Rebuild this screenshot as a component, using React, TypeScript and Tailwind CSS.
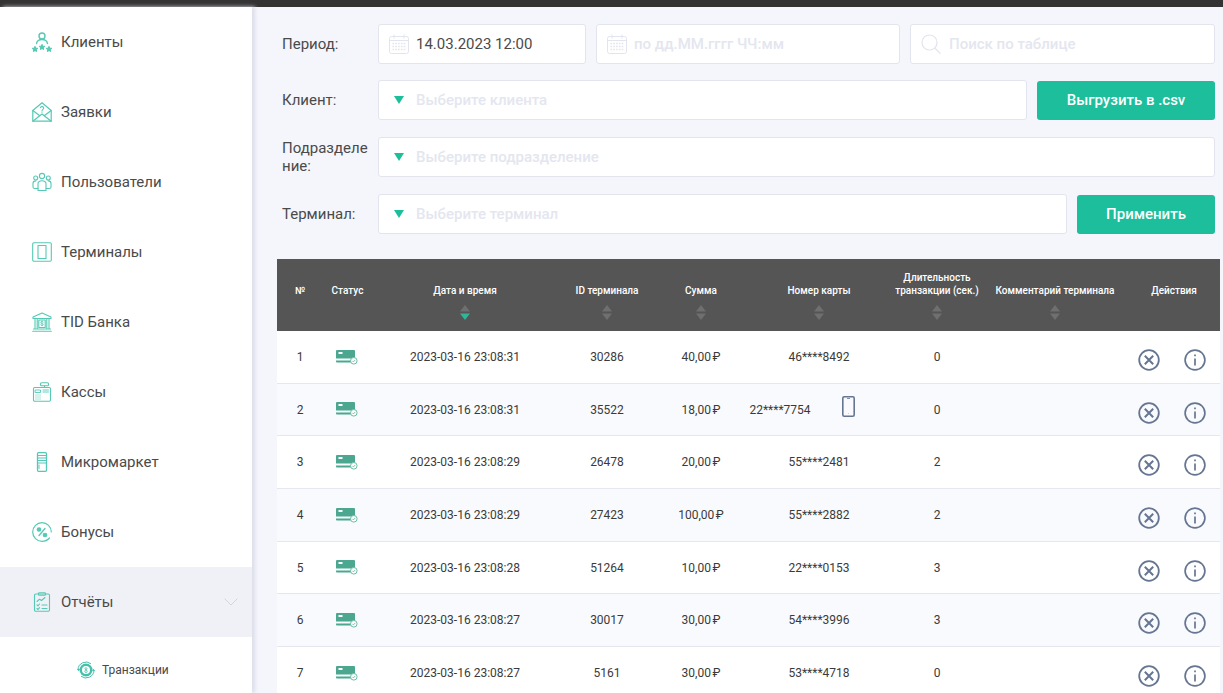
import React from 'react';

const font = { fontFamily: 'Roboto, "Liberation Sans", sans-serif' };

const IconBase = ({ children, className }: { children: React.ReactNode; className: string }) => (
  <svg viewBox="0 0 20 20" fill="none" stroke="currentColor" strokeWidth="1.1" strokeLinecap="round" strokeLinejoin="round" className={className}>
    {children}
  </svg>
);

const star = (x: number, y: number) =>
  `M${x} ${y - 2.4}l.75 1.6 1.75.2-1.3 1.2.35 1.75-1.55-.9-1.55.9.35-1.75-1.3-1.2 1.75-.2z`;

const ClientsIcon = () => (
  <IconBase className="w-5 h-5 text-[#55c9b5]">
    <circle cx="10" cy="4" r="3" strokeWidth="1.4" />
    <path d="M4.5 11.5c.5-2.5 2.5-4 5.5-4s5 1.500 5.500 4" strokeWidth="1.300" />
    <path d={star(3, 17)} fill="currentColor" />
    <path d={star(10, 15)} fill="currentColor" />
    <path d={star(17, 17)} fill="currentColor" />
  </IconBase>
);

const RequestsIcon = () => (
  <IconBase className="w-5 h-5 text-[#55c9b5]">
    <path d="M.8 8.500 10 .8l9.200 7.700v10.700H.8z" strokeWidth="1.200" />
    <path d="M.8 8.500l6.700 5M19.200 8.500l-6.700 5M.8 19.200l9.200-7.200 9.200 7.200" strokeWidth="1.200" />
    <path d="M8.400 5.800c.2-1.600 3.300-1.600 3.300.3 0 1.300-1.700 1.300-1.700 2.800M10 10.200v.1" />
  </IconBase>
);

const UsersIcon = () => (
  <IconBase className="w-5 h-5 text-[#55c9b5]">
    <circle cx="10" cy="4" r="2.600" />
    <circle cx="3.700" cy="6" r="2" />
    <circle cx="16.300" cy="6" r="2" />
    <path d="M6 18.500v-6.500c0-2 1.500-3.200 4-3.200s4 1.200 4 3.200v6.500z" />
    <path d="M6 16.500H2.800c-1 0-1.800-.6-1.800-1.600v-3.400c0-1.500 1-2.600 2.700-2.600M14 16.500h3.200c1 0 1.800-.6 1.800-1.600v-3.400c0-1.500-1-2.600-2.700-2.600" />
  </IconBase>
);

const TerminalIcon = () => (
  <IconBase className="w-5 h-5 text-[#55c9b5]">
    <rect x=".7" y=".7" width="18.600" height="18.600" rx="1.200" />
    <rect x="6" y="3.500" width="8" height="13" />
  </IconBase>
);

const BankIcon = () => (
  <IconBase className="w-5 h-5 text-[#55c9b5]">
    <path d="M1 5 10 1l9 4v1.500H1z" />
    <path d="M3 6.500v10M5.200 6.500v10M14.800 6.500v10M17 6.500v10M1.500 17h17M.7 19.200h18.600" />
    <rect x="6.800" y="8" width="6.400" height="7.500" />
    <path d="M11.300 10c-.4-.8-2.600-.8-2.600.5 0 1.300 2.600.8 2.600 2.100 0 1.200-2.300 1.100-2.700.4M10 9v4.800" strokeWidth=".8" />
  </IconBase>
);

const CashIcon = () => (
  <IconBase className="w-5 h-5 text-[#55c9b5]">
    <rect x="8.500" y=".7" width="8" height="3" rx="1" />
    <path d="M12.500 3.700v1.800" />
    <rect x="1.500" y="5.500" width="17" height="13.800" rx="1.200" />
    <path d="M3.500 8h5v2.500h-5zM11 8h5.500M11 10h5.500" strokeWidth=".9" />
    <path d="M3.500 13h6M3.500 15h6M3.500 17h6" strokeWidth="1" strokeDasharray="1 1" strokeLinecap="butt" />
  </IconBase>
);

const MarketIcon = () => (
  <IconBase className="w-5 h-5 text-[#55c9b5]">
    <rect x="5.500" y=".7" width="9" height="18.600" rx="1" strokeWidth="1.300" />
    <path d="M5.500 3.500h9M5.500 6h9M5.500 8.500h9M5.500 11h9" strokeWidth="1" />
    <path d="M7 13v3.500" strokeWidth="1" />
  </IconBase>
);

const BonusIcon = () => (
  <IconBase className="w-5 h-5 text-[#55c9b5]">
    <path d="M17.500 16C15.700 18.100 13 19.300 10 19.300 4.900 19.300.7 15.100.7 10S4.900.7 10 .7 19.300 4.900 19.300 10" strokeWidth="1.200" />
    <circle cx="7" cy="7.500" r="1.800" fill="currentColor" />
    <circle cx="13" cy="13" r="1.800" fill="currentColor" />
    <path d="M13 6.500 7 13.500" strokeWidth="1.300" />
  </IconBase>
);

const ReportIcon = () => (
  <IconBase className="w-5 h-5 text-[#55c9b5]">
    <rect x="2.500" y="2" width="15" height="17.300" rx="1.200" />
    <rect x="6.500" y=".7" width="7" height="2.600" rx=".8" />
    <path d="M5 9.500l2.500-2.300 2 1.300 3.500-3M5 12.800l1 1 1.500-1.800M10 13h5M5 16.500l1 1 1.500-1.800M10 16.500h5" />
  </IconBase>
);

const TransactionIcon = () => (
  <svg viewBox="0 0 18 18" fill="none" className="w-[18px] h-[18px] text-[#45c0ac]">
    <circle cx="9" cy="9" r="6.500" fill="currentColor" />
    <circle cx="9" cy="9" r="4" fill="#fff" />
    <path d="M1 9a8 8 0 0 1 13-6.200M17 9a8 8 0 0 1-13 6.200" stroke="currentColor" strokeWidth="1" />
    <path d="M0 8h3l-1.500 2.200zM15 10h3l-1.500-2.200z" fill="currentColor" />
    <circle cx="9" cy="7.700" r="1" stroke="currentColor" strokeWidth=".8" />
    <circle cx="9" cy="10.300" r="1.200" stroke="currentColor" strokeWidth=".8" />
  </svg>
);

const CalendarIcon = () => (
  <svg viewBox="0 0 20 20" fill="none" stroke="#e3e5ee" strokeWidth="1" className="w-5 h-5 shrink-0">
    <rect x=".5" y="2.500" width="19" height="17" rx="2" />
    <path d="M.5 6.500h19M5 .5v4M15 .5v4" />
    <path d="M3.500 9.500h13M3.500 12.500h13M3.500 15.500h13" strokeWidth="1.600" strokeDasharray="1.600 1.200" />
  </svg>
);

const SearchIcon = () => (
  <svg viewBox="0 0 20 20" fill="none" stroke="#e3e5ee" strokeWidth="1.200" className="w-5 h-5 shrink-0">
    <circle cx="8.500" cy="8.500" r="7.500" />
    <path d="M13.800 14l5.700 5.700" />
  </svg>
);

const Triangle = () => (
  <svg viewBox="0 0 10 8" className="w-[10px] h-[8px] shrink-0">
    <path d="M0 0h10L5 8z" fill="#1dbf9b" />
  </svg>
);

const SortArrows = ({ active }: { active?: boolean }) => (
  <svg viewBox="0 0 10 15" className="w-[10px] h-[15px]">
    <path d="M5 0l5 6.500H0z" fill="#6f6f6f" />
    <path d="M0 8.500h10L5 15z" fill={active ? '#2fb597' : '#6f6f6f'} />
  </svg>
);

const CardIcon = () => (
  <svg viewBox="0 0 22 15" className="w-[22px] h-[15px]">
    <path d="M1 0h17a1 1 0 0 1 1 1v7.500H0V1a1 1 0 0 1 1-1z" fill="#4ba78f" />
    <rect x="2.500" y="2" width="4" height="2" fill="#fff" />
    <path d="M0 10.500h15V12.500H1a1 1 0 0 1-1-1z" fill="#4ba78f" />
    <circle cx="17.800" cy="10.800" r="3.300" fill="#fff" stroke="#6dbba6" strokeWidth="1" />
    <path d="M16.300 10.800l1.100 1.100 1.900-2" fill="none" stroke="#6dbba6" strokeWidth=".9" />
  </svg>
);

const PhoneIcon = () => (
  <svg viewBox="0 0 13 21" fill="none" stroke="#667592" strokeWidth="1.600" className="w-[13px] h-[21px]">
    <rect x=".8" y=".8" width="11.400" height="19.400" rx="1.400" />
    <path d="M5 2.500h3" strokeWidth=".8" />
    <path d="M6.500 17.500v.3" strokeWidth="1" />
  </svg>
);

const CancelIcon = () => (
  <svg viewBox="0 0 22 22" fill="none" stroke="#667592" strokeWidth="1.800" className="w-[22px] h-[22px]">
    <circle cx="11" cy="11" r="9.800" />
    <path d="M6.800 6.800l8.400 8.400M15.200 6.800l-8.400 8.400" strokeWidth="2" />
  </svg>
);

const InfoIcon = () => (
  <svg viewBox="0 0 22 22" fill="none" stroke="#667592" strokeWidth="1.700" className="w-[22px] h-[22px]">
    <circle cx="11" cy="11" r="9.900" />
    <path d="M11 9.500v7M11 5.500v1.800" strokeWidth="1.700" />
  </svg>
);

const menu = [
  { label: 'Клиенты', icon: <ClientsIcon /> },
  { label: 'Заявки', icon: <RequestsIcon /> },
  { label: 'Пользователи', icon: <UsersIcon /> },
  { label: 'Терминалы', icon: <TerminalIcon /> },
  { label: 'TID Банка', icon: <BankIcon /> },
  { label: 'Кассы', icon: <CashIcon /> },
  { label: 'Микромаркет', icon: <MarketIcon /> },
  { label: 'Бонусы', icon: <BonusIcon /> },
];

const rows = [
  { n: 1, date: '2023-03-16 23:08:31', tid: '30286', sum: '40,00 ₽', card: '46****8492', dur: 0 },
  { n: 2, date: '2023-03-16 23:08:31', tid: '35522', sum: '18,00 ₽', card: '22****7754', dur: 0, phone: true },
  { n: 3, date: '2023-03-16 23:08:29', tid: '26478', sum: '20,00 ₽', card: '55****2481', dur: 2 },
  { n: 4, date: '2023-03-16 23:08:29', tid: '27423', sum: '100,00 ₽', card: '55****2882', dur: 2 },
  { n: 5, date: '2023-03-16 23:08:28', tid: '51264', sum: '10,00 ₽', card: '22****0153', dur: 3 },
  { n: 6, date: '2023-03-16 23:08:27', tid: '30017', sum: '30,00 ₽', card: '54****3996', dur: 3 },
  { n: 7, date: '2023-03-16 23:08:27', tid: '5161', sum: '30,00 ₽', card: '53****4718', dur: 0 },
];

const gridCols = 'grid grid-cols-[46px_49px_186px_98px_90px_146px_90px_146px_92px]';

const Sidebar = () => (
  <aside className="w-[252px] shrink-0 bg-white shadow-[3px_0_4px_#dcdee9] z-10 overflow-hidden">
    {menu.map((item) => (
      <div key={item.label} className="h-[70px] flex items-center pl-8 gap-[9px] text-[15px] text-[#4a4a4a]">
        {item.icon}
        <span>{item.label}</span>
      </div>
    ))}
    <div className="h-[70px] flex items-center pl-8 gap-[9px] text-[15px] text-[#4a4a4a] bg-[#f0f1f6]">
      <ReportIcon />
      <span>Отчёты</span>
      <svg viewBox="0 0 14 8" fill="none" stroke="#d3d5e0" strokeWidth="1" className="w-[14px] h-2 ml-auto mr-[14px]">
        <path d="M.5.5 7 7 13.500.5" />
      </svg>
    </div>
    <div className="h-[64px] flex pt-6 pl-[77px] gap-[7px] items-start text-[12px] leading-[18px] text-[#4a4a4a]">
      <TransactionIcon />
      <span>Транзакции</span>
    </div>
  </aside>
);

const boxClass = 'h-10 bg-white border border-[#e3e5ee] rounded-[3px] flex items-center text-[15px] font-medium';

const SelectBox = ({ text, className }: { text: string; className: string }) => (
  <div className={`${boxClass} pl-[15px] gap-3 text-[#e4e6ef] ${className}`}>
    <Triangle />
    <span>{text}</span>
  </div>
);

const Label = ({ children }: { children: React.ReactNode }) => (
  <div className="w-[96px] shrink-0 pr-[6px] text-[15px] leading-[18px] text-[#4a4a4a] break-all">{children}</div>
);

const Button = ({ children, className }: { children: React.ReactNode; className: string }) => (
  <button className={`h-[39px] shrink-0 bg-[#1cbe9b] rounded-[3px] text-white text-[15px] font-medium ${className}`}>
    {children}
  </button>
);

const Filters = () => (
  <div className="pl-[30px] pr-2 pt-[17px] flex flex-col">
    <div className="flex items-center">
      <Label>Период:</Label>
      <div className="flex-1 flex gap-[10px]">
        <div className="h-10 bg-white border border-[#e3e5ee] rounded-[3px] flex items-center text-[15px] w-[208px] pl-[10px] gap-[7px] text-[#4a4a4a]">
          <CalendarIcon />
          <span>14.03.2023 12:00</span>
        </div>
        <div className={`${boxClass} w-[304px] pl-[10px] gap-[7px] text-[#e4e6ef]`}>
          <CalendarIcon />
          <span>по дд.ММ.гггг ЧЧ:мм</span>
        </div>
        <div className={`${boxClass} flex-1 pl-[10px] gap-[8px] text-[#e4e6ef]`}>
          <SearchIcon />
          <span>Поиск по таблице</span>
        </div>
      </div>
    </div>
    <div className="flex items-center mt-4">
      <Label>Клиент:</Label>
      <SelectBox text="Выберите клиента" className="flex-1" />
      <Button className="w-[178px] ml-[10px]">Выгрузить в .csv</Button>
    </div>
    <div className="flex items-center mt-[17px]">
      <Label>Подразделение:</Label>
      <SelectBox text="Выберите подразделение" className="flex-1" />
    </div>
    <div className="flex items-center mt-[17px]">
      <Label>Терминал:</Label>
      <SelectBox text="Выберите терминал" className="flex-1" />
      <Button className="w-[138px] ml-[10px]">Применить</Button>
    </div>
  </div>
);

const HeaderCell = ({ children, sort, active }: { children: React.ReactNode; sort?: boolean; active?: boolean }) => (
  <div className="flex flex-col items-center h-[72px]">
    <div className="h-[38px] flex items-end justify-center text-center leading-[13px]">
      <span>{children}</span>
    </div>
    {sort && (
      <div className="mt-2 flex">
        <SortArrows active={active} />
      </div>
    )}
  </div>
);

const Table = () => (
  <div className="ml-[25px] mr-[3px] mt-[25px] text-[12px]">
    <div className={`${gridCols} bg-[#555555] h-[72px] text-[10px] font-medium text-white`}>
      <HeaderCell>№</HeaderCell>
      <HeaderCell>Статус</HeaderCell>
      <HeaderCell sort active>Дата и время</HeaderCell>
      <HeaderCell sort>ID терминала</HeaderCell>
      <HeaderCell sort>Сумма</HeaderCell>
      <HeaderCell sort>Номер карты</HeaderCell>
      <HeaderCell sort>Длительность<br />транзакции (сек.)</HeaderCell>
      <HeaderCell sort>Комментарий терминала</HeaderCell>
      <HeaderCell>Действия</HeaderCell>
    </div>
    {rows.map((r) => (
      <div
        key={r.n}
        className={`${gridCols} h-[52.67px] border-b border-[#e6e7ee] items-center text-center text-[#3a3a3a] ${r.n % 2 === 0 ? 'bg-[#f9fafd]' : 'bg-white'}`}
      >
        <div className="pt-[0.6px]">{r.n}</div>
        <div className="flex justify-center pr-[1px] mt-[1px]"><CardIcon /></div>
        <div className="pt-[0.6px]">{r.date}</div>
        <div className="pt-[0.6px]">{r.tid}</div>
        <div className="pt-[0.6px] [word-spacing:-1.5px]">{r.sum}</div>
        {r.phone ? (
          <div className="relative pr-[78px] pt-[0.6px]">
            {r.card}
            <span className="absolute left-[96px] -top-[4px]"><PhoneIcon /></span>
          </div>
        ) : (
          <div className="pt-[0.6px]">{r.card}</div>
        )}
        <div className="pt-[0.6px]">{r.dur}</div>
        <div />
        <div className="flex items-center gap-[24px] pl-[10px] mt-[6.6px]">
          <CancelIcon />
          <InfoIcon />
        </div>
      </div>
    ))}
  </div>
);

const App: React.FC = () => (
  <div className="w-[1223px] h-[693px] flex flex-col overflow-hidden bg-[#f5f6fb]" style={font}>
    <div className="h-[7px] shrink-0 bg-[#333333]" />
    <div className="flex flex-1 min-h-0">
      <Sidebar />
      <main className="flex-1 min-w-0 overflow-hidden">
        <Filters />
        <Table />
      </main>
    </div>
  </div>
);

export default App;
